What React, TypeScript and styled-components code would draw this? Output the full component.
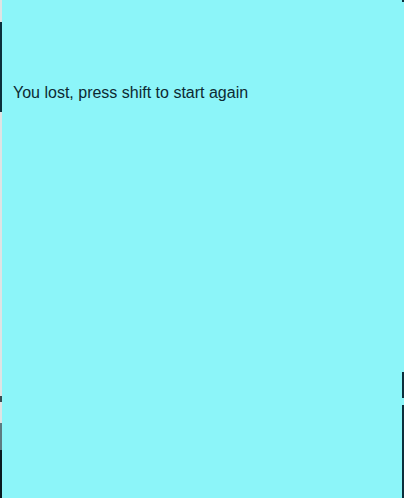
import React from "react";
import styled, { createGlobalStyle } from "styled-components";

const Global = createGlobalStyle`
  html, body { margin: 0; padding: 0; background: #8cf5f9; }
  body { font-family: "Liberation Sans", Arial, sans-serif; }
`;

const Page = styled.div`
  display: flex;
  width: 404px;
  height: 498px;
  overflow: hidden;
`;

const Strip = styled.div`
  display: flex;
  flex-direction: column;
  width: 2px;
  flex: none;
`;

const Seg = styled.div<{ $h: number; $c: string }>`
  height: ${(p) => p.$h}px;
  background: ${(p) => p.$c};
  flex: none;
`;

const Panel = styled.div`
  flex: 1;
  background: #8cf5f9;
  padding: 84px 0 0 11px;
`;

const Message = styled.div`
  font-size: 16px;
  line-height: 18px;
  color: #0c2a33;
`;

export default function App() {
  return (
    <>
      <Global />
      <Page>
        <Strip>
          <Seg $h={22} $c="#dfe3e4" />
          <Seg $h={90} $c="#0b2f3c" />
          <Seg $h={284} $c="#dfe3e4" />
          <Seg $h={6} $c="#3a4a50" />
          <Seg $h={21} $c="#dfe3e4" />
          <Seg $h={27} $c="#5d7a80" />
          <Seg $h={48} $c="#0a1a20" />
        </Strip>
        <Panel>
          <Message>You lost, press shift to start again</Message>
        </Panel>
        <Strip>
          <Seg $h={2} $c="#0b2f3c" />
          <Seg $h={370} $c="#8cf5f9" />
          <Seg $h={26} $c="#0b2f3c" />
          <Seg $h={7} $c="#8cf5f9" />
          <Seg $h={93} $c="#0b2f3c" />
        </Strip>
      </Page>
    </>
  );
}
